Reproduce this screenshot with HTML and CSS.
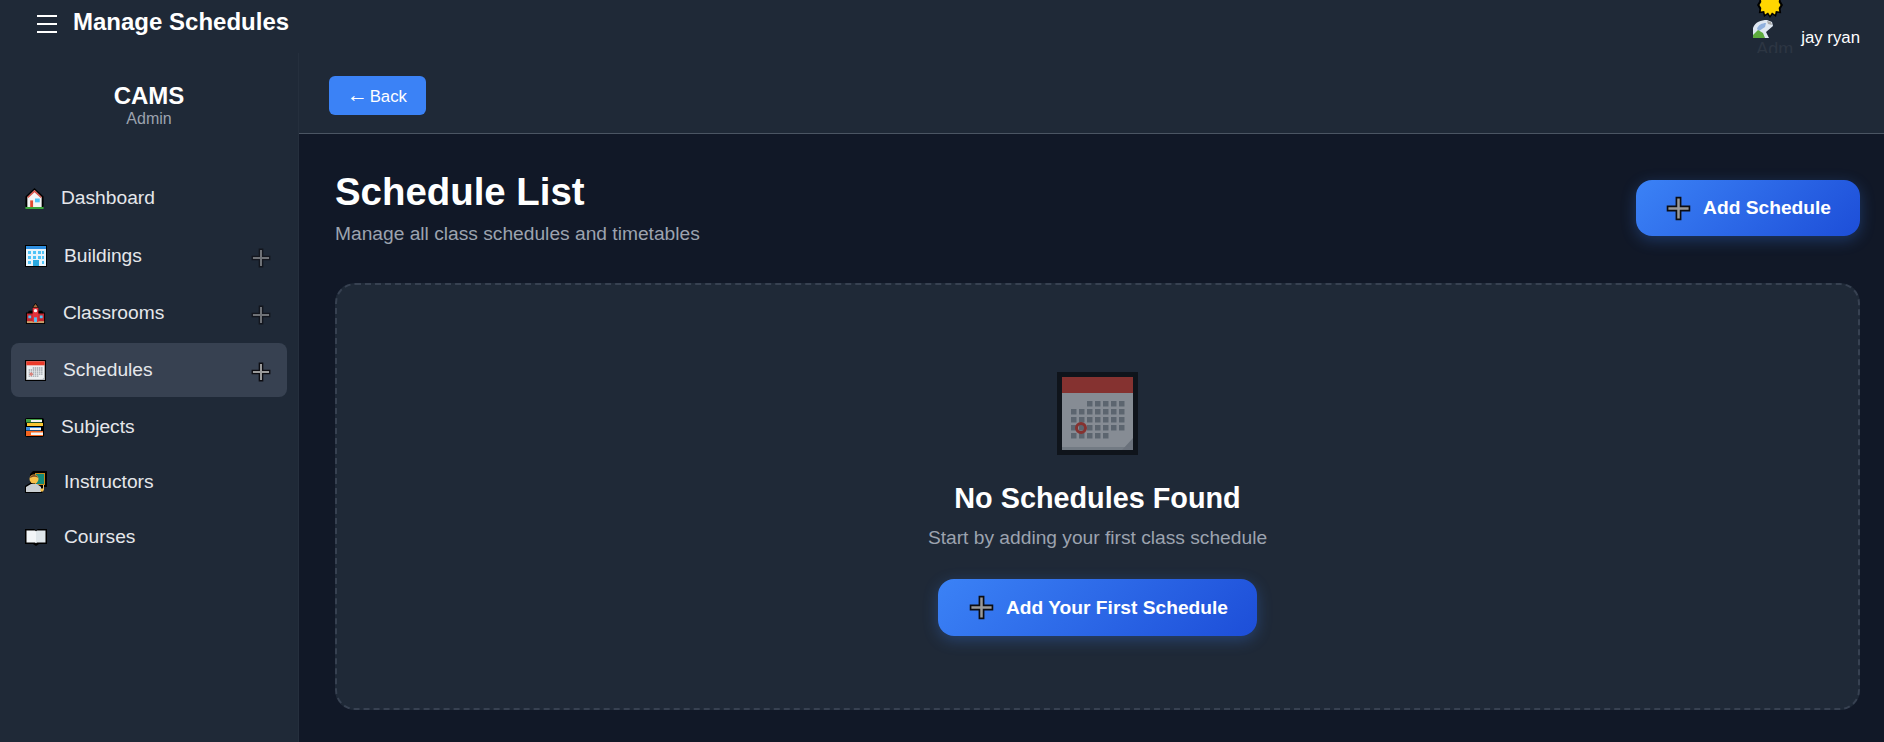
FILE: index.html
```html
<!DOCTYPE html>
<html lang="en">
<head>
    <meta charset="UTF-8">
    <meta name="viewport" content="width=device-width, initial-scale=1.0">
    <title>Manage Schedules</title>
    <link rel="stylesheet" href="styles.css">
</head>
<body>

<svg class="sprites" aria-hidden="true">
    <symbol id="plus" viewBox="0 0 24 24">
        <path d="M10 1.500h4V10h8.500v4H14v8.500h-4V14H1.500v-4H10z" fill="#9a9a9a" stroke="#0d0d12" stroke-width="1.600"/>
    </symbol>
    <symbol id="house" viewBox="0 0 19 22">
        <rect x="0" y="19" width="19" height="3" fill="#3aa63a"/>
        <path d="M9.500 0 0 9v11h19V9z" fill="#000"/>
        <path d="M9.500 2 2 9.500V20h15V9.500z" fill="#f4f4f4"/>
        <path d="M9.500 2 2 9.500l1 1 6.500-6 6.500 6 1-1z" fill="#d9534a"/>
        <rect x="5" y="13" width="3" height="7" fill="#e2492f"/>
        <rect x="10" y="11" width="5" height="4" fill="#4fc3f7"/>
    </symbol>
    <symbol id="office" viewBox="0 0 22 22">
        <rect width="22" height="22" fill="#000"/>
        <rect x="1" y="1" width="20" height="20" fill="#e8f4fb"/>
        <rect x="1" y="1" width="20" height="3" fill="#2f8fe0"/>
        <path d="M3 6h3v3H3zm5 0h3v3H8zm5 0h3v3h-3zm4 0h2v3h-2zM3 11h3v3H3zm5 0h3v3H8zm5 0h3v3h-3zm4 0h2v3h-2zM3 16h3v3H3zm14 0h2v3h-2z" fill="#4fc3f7"/>
        <rect x="8" y="15" width="6" height="6" fill="#29a9e0"/>
    </symbol>
    <symbol id="school" viewBox="0 0 22 22">
        <path d="M11 0 8 4v4H4L3 10H1v12h20V10h-2l-1-2h-4V4z" fill="#000"/>
        <rect x="2" y="11" width="18" height="9" fill="#c4262e"/>
        <rect x="2" y="19" width="18" height="2" fill="#c9a06a"/>
        <rect x="8" y="5" width="6" height="15" fill="#e5323b"/>
        <path d="M11 1 8.500 4.500h5z" fill="#a0683a"/>
        <circle cx="11" cy="8" r="1.800" fill="#f4f4f4"/>
        <path d="M3.500 13h3v3h-3zm12 0h3v3h-3z" fill="#4fc3f7"/>
        <rect x="9.500" y="15" width="3" height="5" fill="#4fc3f7"/>
    </symbol>
    <symbol id="calendar" viewBox="0 0 81 83" preserveAspectRatio="none">
        <rect width="81" height="83" fill="#000"/>
        <rect x="5" y="5" width="71" height="73" fill="#eceff1"/>
        <rect x="5" y="5" width="71" height="16" fill="#ea3b2a"/>
        <g fill="none" stroke="#9aa1a8" stroke-width="5.500" stroke-dasharray="5.500 2.500">
            <path d="M30 31.750h38"/>
            <path d="M14 39.750h54"/>
            <path d="M14 47.750h54"/>
            <path d="M14 55.750h54"/>
            <path d="M14 63.750h38"/>
        </g>
        <rect x="5" y="75" width="71" height="3" fill="#c5cacf"/>
        <path d="M76 66v12H65z" fill="#b4b9be"/>
        <circle cx="24" cy="56" r="4.500" fill="none" stroke="#ea3b2a" stroke-width="3"/>
    </symbol>
    <symbol id="books" viewBox="0 0 19 19">
        <rect x="0" y="0" width="19" height="19" rx="2" fill="#000"/>
        <rect x="1" y="1" width="16" height="3.500" fill="#43a047"/>
        <rect x="6" y="2" width="11" height="2" fill="#f4f4f4"/>
        <rect x="2" y="5" width="16" height="3" fill="#f9c531"/>
        <rect x="1" y="9" width="15" height="3.500" fill="#3b8de0"/>
        <rect x="5" y="10" width="11" height="2" fill="#f4f4f4"/>
        <rect x="1" y="13" width="17" height="5" fill="#f4651f"/>
        <rect x="6" y="14.500" width="12" height="2.500" fill="#f4f4f4"/>
    </symbol>
    <symbol id="teacher" viewBox="0 0 22 22">
        <path d="M8 0h14v16H18v4l-1 2H0v-7l5-3V3z" fill="#000"/>
        <rect x="10" y="2" width="10" height="12" fill="#c58a1c"/>
        <rect x="11" y="3" width="8" height="10" fill="#128a78"/>
        <circle cx="9" cy="8" r="4.500" fill="#f7c04a"/>
        <path d="M5 7c0-4 8-4 8 0-3-2-5-1-8 0z" fill="#7a4a24"/>
        <path d="M1 21v-5l5-3h6l4 3v5z" fill="#c9ced2"/>
        <rect x="18" y="14" width="1" height="5" fill="#e0c080"/>
        <circle cx="17" cy="19" r="1.700" fill="#f7c04a"/>
    </symbol>
    <symbol id="book" viewBox="0 0 22 18">
        <path d="M0 1h9l2 1 2-1h9v15h-8l-3 2-3-2H0z" fill="#000"/>
        <path d="M1.500 2.500h8.500l1 .8v12l-1-.8H1.500z" fill="#f2f5f7"/>
        <path d="M11 3.300l1-.8h8.500v12H12l-1 .8z" fill="#dfe6ea"/>
    </symbol>
    <symbol id="sun" viewBox="0 0 26 26">
        <path d="M13 0l2.500 3.500L19 1l1 4.200 4.200-.4-.6 4.200L26 13l-2.400 4 .6 4.200-4.200-.4L19 25l-3.500-2.500L13 26l-2.500-3.500L7 25l-1-4.200-4.200.4.6-4.200L0 13l2.400-4-.6-4.200L6 5.200 7 1l3.500 2.500z" fill="#000"/>
        <path d="M13 2.500l2 3 3-2 .8 3.400 3.400-.3-.5 3.400L23.500 13l-1.800 3 .5 3.400-3.400-.3L18 22.500l-3-2-2 3-2-3-3 2-.8-3.400-3.400.3.500-3.400L2.500 13l1.800-3-.5-3.400 3.400.3L8 3.500l3 2z" fill="#ffd600"/>
    </symbol>
    <symbol id="broken" viewBox="0 0 20 18">
        <path d="M0 18V8C2 2 8 0 14 0l5 2 1 4-7 6 3 6z" fill="#dfe8f2"/>
        <path d="M4 9c1-4 5-6 9-6l-1 4-6 4z" fill="#8fb0dd"/>
        <path d="M0 18v-3l5-5 5 3 2 5z" fill="#5dab3d"/>
        <path d="M14 1l4 1 1 3-4-1z" fill="#a8a8a8"/>
    </symbol>
</svg>

<header class="topbar">
    <div class="topbar-left">
        <div class="menu-btn">
            <span></span>
            <span></span>
            <span></span>
        </div>
        <h1 class="page-title">Manage Schedules</h1>
    </div>
    <div class="user-box">
        <div class="avatar">
            <svg class="sun"><use href="#sun"/></svg>
            <svg class="broken"><use href="#broken"/></svg>
            <span class="alt-text">Adm</span>
        </div>
        <span class="user-name">jay ryan</span>
    </div>
</header>

<div class="layout">
    <aside class="sidebar">
        <div class="brand">
            <div class="brand-name">CAMS</div>
            <div class="brand-role">Admin</div>
        </div>
        <nav class="nav">
            <a class="nav-item nav-dashboard">
                <svg class="nav-icon icon-narrow"><use href="#house"/></svg>
                <span class="nav-label">Dashboard</span>
            </a>
            <a class="nav-item has-sub">
                <svg class="nav-icon icon-wide"><use href="#office"/></svg>
                <span class="nav-label">Buildings</span>
                <svg class="nav-plus"><use href="#plus"/></svg>
            </a>
            <a class="nav-item has-sub">
                <svg class="nav-icon"><use href="#school"/></svg>
                <span class="nav-label">Classrooms</span>
                <svg class="nav-plus"><use href="#plus"/></svg>
            </a>
            <a class="nav-item has-sub active">
                <svg class="nav-icon"><use href="#calendar"/></svg>
                <span class="nav-label">Schedules</span>
                <svg class="nav-plus"><use href="#plus"/></svg>
            </a>
            <a class="nav-item">
                <svg class="nav-icon icon-narrow"><use href="#books"/></svg>
                <span class="nav-label">Subjects</span>
            </a>
            <a class="nav-item">
                <svg class="nav-icon icon-wide"><use href="#teacher"/></svg>
                <span class="nav-label">Instructors</span>
            </a>
            <a class="nav-item">
                <svg class="nav-icon icon-wide"><use href="#book"/></svg>
                <span class="nav-label">Courses</span>
            </a>
        </nav>
    </aside>

    <div class="main">
        <div class="subheader">
            <button class="back-btn"><span class="back-arrow">←</span> Back</button>
        </div>
        <div class="content">
            <div class="content-head">
                <div>
                    <h2 class="list-title">Schedule List</h2>
                    <p class="list-sub">Manage all class schedules and timetables</p>
                </div>
                <button class="add-btn">
                    <svg class="add-icon"><use href="#plus"/></svg>
                    Add Schedule
                </button>
            </div>
            <div class="empty-box">
                <svg class="empty-icon"><use href="#calendar"/></svg>
                <h3 class="empty-title">No Schedules Found</h3>
                <p class="empty-text">Start by adding your first class schedule</p>
                <button class="add-btn">
                    <svg class="add-icon"><use href="#plus"/></svg>
                    Add Your First Schedule
                </button>
            </div>
        </div>
    </div>
</div>

</body>
</html>
```

FILE: styles.css
```css
* {
    box-sizing: border-box;
}
body {
    font-family: "Liberation Sans", Arial, sans-serif;
    background-color: #111827;
    color: #fff;
    margin: 0;
    height: 742px;
    overflow: hidden;
}
.sprites {
    display: none;
}
.topbar {
    display: flex;
    justify-content: space-between;
    align-items: flex-start;
    height: 53px;
    padding: 0 24px 0 37px;
    background-color: #1f2937;
}
.topbar-left {
    display: flex;
    align-items: center;
    gap: 16px;
    height: 44px;
}
.menu-btn {
    display: flex;
    flex-direction: column;
    justify-content: space-between;
    width: 20px;
    height: 18px;
    margin-top: 4px;
}
.menu-btn span {
    display: block;
    height: 2px;
    background-color: #fff;
}
.page-title {
    margin: 0;
    font-size: 24px;
    font-weight: 700;
}
.user-box {
    display: flex;
    align-items: flex-start;
    gap: 11px;
}
.avatar {
    display: flex;
    flex-direction: column;
    width: 37px;
}
.sun {
    width: 26px;
    height: 26px;
    margin: -8px 0 2px 4px;
    flex: none;
}
.broken {
    width: 20px;
    height: 18px;
    flex: none;
}
.alt-text {
    margin: 2px 0 0 3px;
    font-size: 18px;
    line-height: 18px;
    color: #2d3643;
}
.user-name {
    margin-top: 28px;
    font-size: 16.8px;
}
.layout {
    display: flex;
    height: 689px;
}
.sidebar {
    flex: none;
    width: 299px;
    background-color: #1f2937;
    border-right: 1px solid #252f3d;
}
.brand {
    height: 100px;
    padding-top: 29px;
    text-align: center;
}
.brand-name {
    font-size: 24px;
    font-weight: 700;
    line-height: 28px;
}
.brand-role {
    font-size: 16px;
    line-height: 18px;
    color: #9ca3af;
}
.nav {
    display: flex;
    flex-direction: column;
    gap: 1px;
    padding: 18px 11px 0;
}
.nav-item {
    display: flex;
    align-items: center;
    height: 54px;
    padding: 0 16px 0 14px;
    border-radius: 8px;
    font-size: 19.2px;
    color: #e5e7eb;
}
.nav-dashboard {
    margin-bottom: 3px;
}
.has-sub {
    margin-bottom: 2px;
}
.nav-item.active {
    background-color: #374151;
}
.nav-icon {
    width: 21px;
    height: 21px;
    margin-right: 17px;
    flex: none;
}
.icon-narrow {
    width: 19px;
}
.icon-wide {
    width: 22px;
    height: 22px;
}
.nav-label {
    flex: 1;
}
.nav-plus {
    width: 20px;
    height: 20px;
    margin-top: 3px;
    opacity: 0.65;
    flex: none;
}
.nav-item.active .nav-plus {
    opacity: 1;
}
.main {
    flex: 1;
    min-width: 0;
}
.subheader {
    display: flex;
    align-items: center;
    height: 81px;
    padding: 4px 30px 0;
    background-color: #1f2937;
    border-bottom: 1px solid #4b5563;
}
.back-btn {
    height: 39px;
    padding: 0 19px 0 18px;
    background-color: #3b82f6;
    color: #fff;
    border: none;
    border-radius: 6px;
    font-family: inherit;
    font-size: 16.8px;
}
.back-arrow {
    margin-right: -3px;
    font-size: 21px;
    line-height: 1;
}
.content {
    padding: 36px 24px 0 36px;
}
.content-head {
    display: flex;
    justify-content: space-between;
    align-items: flex-start;
    margin-bottom: 37px;
}
.list-title {
    margin: 0;
    font-size: 38.4px;
    line-height: 44px;
    font-weight: 700;
}
.list-sub {
    margin: 8px 0 0;
    font-size: 19.2px;
    line-height: 24px;
    color: #9ca3af;
}
.add-btn {
    display: flex;
    align-items: center;
    gap: 12px;
    height: 56px;
    padding: 0 29px 0 31px;
    background: linear-gradient(135deg, #3b82f6, #1d4ed8);
    color: #fff;
    border: none;
    border-radius: 16px;
    font-family: inherit;
    font-size: 19.2px;
    font-weight: 700;
    box-shadow: 0 4px 15px rgba(59, 130, 246, 0.3);
}
.content-head .add-btn {
    margin-top: 10px;
    padding-left: 30px;
}
.add-icon {
    width: 25px;
    height: 25px;
    flex: none;
}
.empty-box {
    display: flex;
    flex-direction: column;
    align-items: center;
    height: 427px;
    padding-top: 87px;
    background-color: #1f2937;
    border: 2px dashed #374151;
    border-radius: 20px;
}
.empty-icon {
    width: 81px;
    height: 83px;
    opacity: 0.5;
    flex: none;
}
.empty-title {
    margin: 26px 0 0;
    font-size: 28.8px;
    line-height: 34px;
    font-weight: 700;
}
.empty-text {
    margin: 11px 0 0;
    font-size: 19.2px;
    line-height: 24px;
    color: #9ca3af;
}
.empty-box .add-btn {
    height: 57px;
    margin-top: 29px;
}
```
